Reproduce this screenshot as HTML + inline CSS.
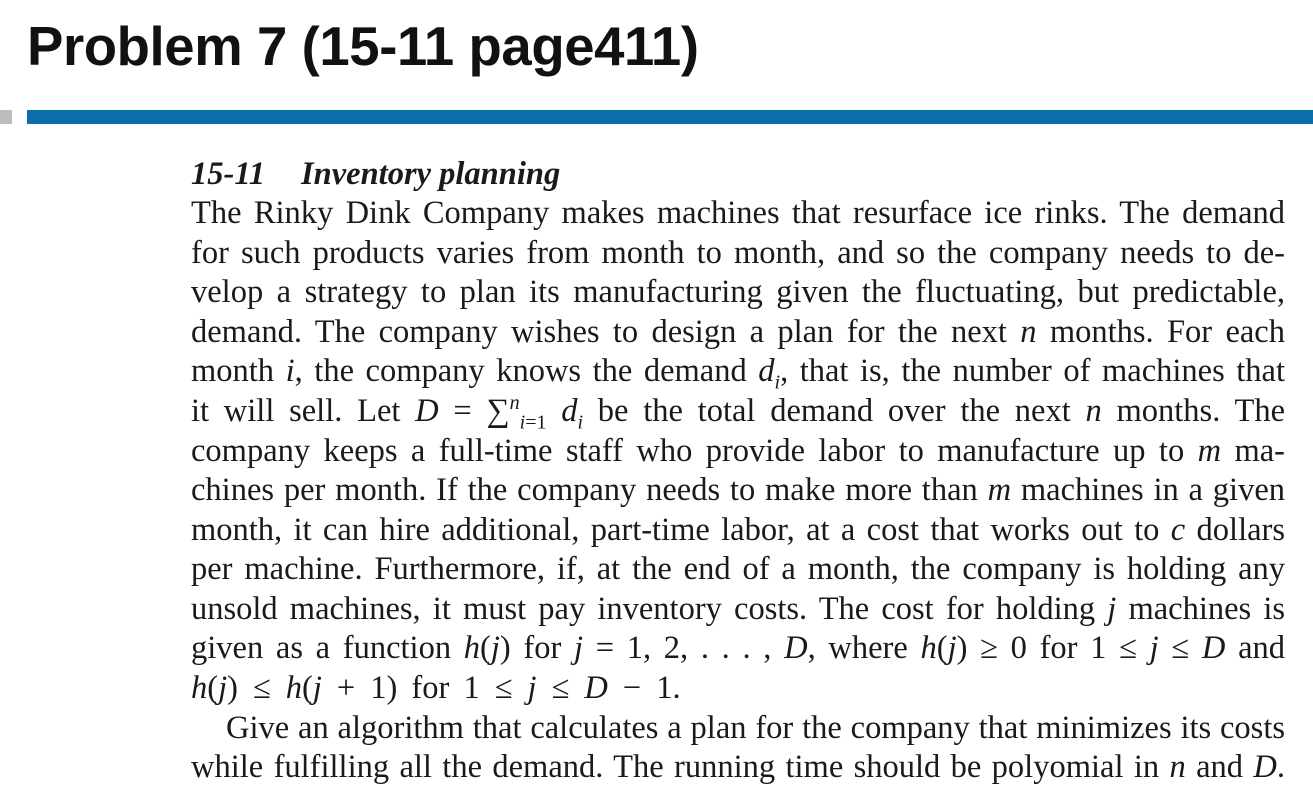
<!DOCTYPE html>
<html><head><meta charset="utf-8"><style>
body{margin:0;width:1313px;height:801px;background:#fff;overflow:hidden;position:relative}
h1{position:absolute;left:27px;top:15px;margin:0;font:bold 54.5px "Liberation Sans",sans-serif;color:#111;letter-spacing:-0.4px}
.g{position:absolute;left:0;top:110px;width:12px;height:14px;background:#bdbdbd}
.b{position:absolute;left:27px;top:110px;width:1286px;height:14px;background:#0a6ea8}
.l{position:absolute;left:191px;width:1094px;font:32.5px "Liberation Serif",serif;color:#1a1a1a;white-space:nowrap;text-align:justify;text-align-last:justify;line-height:34px}
.nl{text-align-last:left}
i{font-style:italic}
sub,sup{font-size:20px;line-height:0}
.o{margin:0 11px}
</style></head><body>
<h1>Problem 7 (15-11 page411)</h1>
<div class="g"></div><div class="b"></div>
<div class="l nl" style="top:157px"><b><i>15-11<span style="display:inline-block;width:36px"></span>Inventory planning</i></b></div>
<div class="l" style="top:196px">The Rinky Dink Company makes machines that resurface ice rinks. The demand</div>
<div class="l" style="top:236px">for such products varies from month to month, and so the company needs to de-</div>
<div class="l" style="top:275px">velop a strategy to plan its manufacturing given the fluctuating, but predictable,</div>
<div class="l" style="top:315px">demand. The company wishes to design a plan for the next <i>n</i> months. For each</div>
<div class="l" style="top:354px">month <i>i</i>, the company knows the demand <i>d<sub>i</sub></i>, that is, the number of machines that</div>
<div class="l" style="top:394px">it will sell. Let <i>D</i> = ∑<sup><i>n</i></sup><sub><i>i</i>=1</sub> <i>d<sub>i</sub></i> be the total demand over the next <i>n</i> months. The</div>
<div class="l" style="top:434px">company keeps a full-time staff who provide labor to manufacture up to <i>m</i> ma-</div>
<div class="l" style="top:473px">chines per month. If the company needs to make more than <i>m</i> machines in a given</div>
<div class="l" style="top:513px">month, it can hire additional, part-time labor, at a cost that works out to <i>c</i> dollars</div>
<div class="l" style="top:552px">per machine. Furthermore, if, at the end of a month, the company is holding any</div>
<div class="l" style="top:592px">unsold machines, it must pay inventory costs. The cost for holding <i>j</i> machines is</div>
<div class="l" style="top:631px">given as a function <i>h</i>(<i>j</i>) for <i>j</i> = 1, 2, . . . , <i>D</i>, where <i>h</i>(<i>j</i>) ≥ 0 for 1 ≤ <i>j</i> ≤ <i>D</i> and</div>
<div class="l nl" style="top:671px;word-spacing:6px"><i>h</i>(<i>j</i>)<span class="o" style="margin:0 15px">≤</span><i>h</i>(<i>j</i><span class="o" style="margin:0 15px">+</span>1) for 1<span class="o" style="margin:0 15px">≤</span><i>j</i><span class="o" style="margin:0 15px">≤</span><i>D</i><span class="o" style="margin:0 15px">−</span>1.</div>
<div class="l" style="top:711px;left:226px;width:1059px">Give an algorithm that calculates a plan for the company that minimizes its costs</div>
<div class="l" style="top:750px">while fulfilling all the demand. The running time should be polyomial in <i>n</i> and <i>D</i>.</div>
</body></html>
